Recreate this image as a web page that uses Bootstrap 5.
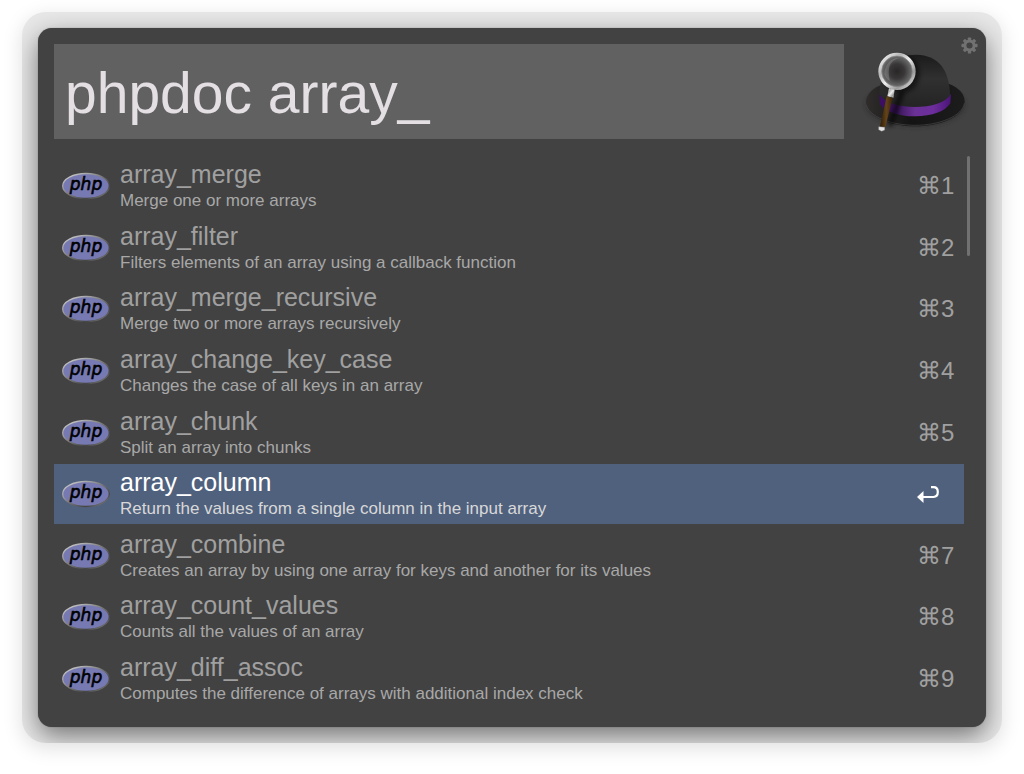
<!DOCTYPE html>
<html lang="en">
<head>
<meta charset="utf-8">
<meta name="viewport" content="width=device-width, initial-scale=1">
<title>phpdoc array_</title>
<link href="https://cdn.jsdelivr.net/npm/bootstrap@5.3.0/dist/css/bootstrap.min.css" rel="stylesheet">
<style>
  body { font-family: "Liberation Sans", Arial, sans-serif; background: #fff; padding: 12px 22px 31px; }
  .frame { padding: 16px; border-radius: 24px; background: #e8e8e8; overflow: hidden; box-shadow: 0 5px 20px rgba(0,0,0,.13); }
  .launcher { background: #424242; border-radius: 14px; padding: 16px; gap: 17px; box-shadow: 0 0 1px rgba(0,0,0,.5), 0 9px 26px rgba(0,0,0,.5); }
  .query, .query:focus { background: #616161; color: #e3dfe3; border: 0; border-radius: 0; box-shadow: none; height: 95px; padding: 3px 11px 0; font-size: 57px; line-height: 64px; }
  .hat { width: 110px; height: 88px; }
  .gear { top: 9px; right: 8px; width: 17px; height: 17px; line-height: 0; }
  .results { gap: 3px; }
  .result { background: transparent; color: #a0a0a0; border: 0; border-radius: 0; padding: 0 9px 0 8px; margin-bottom: 2px; flex: 1 1 0; text-align: left; }
  .result:hover { background: #4b4b4b; color: #a0a0a0; }
  .result.active { background: #50617e; color: #fff; margin: 0 0 2px; }
  .logo { width: 48px; height: 28px; margin-right: 10px; }
  .copy { gap: 1px; padding-top: 1px; }
  .title { font-size: 25px; line-height: 28px; }
  .desc { font-size: 17px; line-height: 24px; color: #a8a8a8; }
  .active .desc { color: #d8d8d8; }
  .keys { width: 38px; font-size: 24px; line-height: 28px; }
  .keys .ret { width: 23px; height: 18px; }
  .thumb { width: 3px; height: 100px; border-radius: 2px; background: #717171; }
</style>
</head>
<body class="min-vh-100 d-flex flex-column">
<svg width="0" height="0" class="position-absolute" aria-hidden="true">
  <defs>
    <linearGradient id="rim" x1="0" y1="0" x2="1" y2="1"><stop offset="0" stop-color="#d8d8dc"/><stop offset=".5" stop-color="#777"/><stop offset=".75" stop-color="#444"/><stop offset="1" stop-color="#999"/></linearGradient>
    <symbol id="php" viewBox="0 0 48 28">
      <ellipse cx="24" cy="14" rx="23.3" ry="12.5" fill="#7679b2" stroke="url(#rim)" stroke-width="1.3"/>
      <text x="24" y="18" font-family="DejaVu Sans, sans-serif" font-size="17" font-style="italic" text-anchor="middle" fill="#000" stroke="#000" stroke-width=".6">php</text>
    </symbol>
  </defs>
</svg>
<main class="frame flex-grow-1 d-flex flex-column">
  <div class="launcher position-relative flex-grow-1 d-flex flex-column">
    <div class="d-flex align-items-center">
      <input class="query form-control flex-grow-1" type="text" value="phpdoc array_" aria-label="Query" spellcheck="false">
      <svg class="hat flex-shrink-0 ms-3" viewBox="30 52 330 264" aria-hidden="true">
        <defs>
          <linearGradient id="crown" x1="0" y1="0" x2="0" y2="1"><stop offset="0" stop-color="#1b1b1b"/><stop offset=".45" stop-color="#303030"/><stop offset="1" stop-color="#242424"/></linearGradient>
          <linearGradient id="brim" x1="0" y1="0" x2="1" y2="0"><stop offset="0" stop-color="#302c2c"/><stop offset=".45" stop-color="#141414"/><stop offset="1" stop-color="#1c1c1c"/></linearGradient>
          <linearGradient id="band" x1="0" y1="0" x2="1" y2="0"><stop offset="0" stop-color="#3d0d66"/><stop offset=".25" stop-color="#3a1659"/><stop offset=".5" stop-color="#6b3197"/><stop offset=".75" stop-color="#6d2e9c"/><stop offset="1" stop-color="#4a1477"/></linearGradient>
          <radialGradient id="glass"><stop offset="0" stop-color="#292626"/><stop offset=".45" stop-color="#393737"/><stop offset="1" stop-color="#777"/></radialGradient>
          <linearGradient id="steel" x1="0" y1="0" x2="1" y2="1"><stop offset="0" stop-color="#fff"/><stop offset=".3" stop-color="#b5b5b5"/><stop offset=".5" stop-color="#eee"/><stop offset=".75" stop-color="#999"/><stop offset="1" stop-color="#eee"/></linearGradient>
          <linearGradient id="wood" x1="0" y1="0" x2="1" y2="0"><stop offset="0" stop-color="#2e1c05"/><stop offset=".5" stop-color="#63431a"/><stop offset="1" stop-color="#3a2408"/></linearGradient>
          <filter id="soft" x="-50%" y="-50%" width="200%" height="200%"><feGaussianBlur stdDeviation="6"/></filter>
        </defs>
        <ellipse cx="196" cy="222" rx="149" ry="66" fill="#222" opacity=".5" filter="url(#soft)"/>
        <path d="M88 165C62 177 48 195 48 214C48 258 120 287 196 287S344 258 344 212C344 190 326 171 298 160Z" fill="url(#brim)"/>
        <path d="M49 222C56 258 124 284 196 284S338 256 343 218" fill="none" stroke="#4a4a4a" stroke-width="2"/>
        <path d="M88 195C90 110 130 72 200 72C262 74 298 112 300 194C286 222 240 230 194 230C145 229 105 218 88 195Z" fill="url(#crown)"/>
        <path d="M88 191C105 219 145 228 194 229C244 229 288 216 303 190L301 218C286 242 246 257 196 257C146 257 102 241 90 219Z" fill="url(#band)"/>
        <ellipse cx="156" cy="130" rx="53" ry="57" fill="#000" opacity=".5" filter="url(#soft)"/>
        <path d="M146 182L166 182L128 287L112 287Z" fill="#000" opacity=".6" filter="url(#soft)"/>
        <circle cx="141" cy="122" r="50" fill="url(#glass)"/>
        <path d="M103 130C105 98 124 82 146 82C118 92 112 110 119 151Q108 145 103 130Z" fill="#aaa" opacity=".3"/>
        <circle cx="141" cy="122" r="51" fill="none" stroke="url(#steel)" stroke-width="10"/>
        <circle cx="141" cy="122" r="46" fill="none" stroke="#888" stroke-width="2"/>
        <path d="M117 173L134 177L130 201L112 197Z" fill="url(#steel)"/>
        <path d="M110 197L128 201L106 290L90 287Z" fill="url(#wood)"/>
        <path d="M86 288L104 290L104 298L95 302L86 297Z" fill="#e1e1e1" stroke="#888"/>
      </svg>
    </div>
    <button class="gear btn p-0 border-0 position-absolute" type="button" aria-label="Preferences">
      <svg width="17" height="17" viewBox="-10 -10 20 20" fill="#717171">
        <g id="teeth"><rect x="-2" y="-9.5" width="4" height="19" rx="1"/><rect x="-9.5" y="-2" width="19" height="4" rx="1"/></g>
        <use href="#teeth" transform="rotate(45)"/>
        <circle r="7"/><circle r="3.6" fill="#424242"/>
      </svg>
    </button>
    <div class="results d-flex flex-grow-1">
      <div class="list-group rounded-0 flex-grow-1" id="list"></div>
      <div class="thumb"></div>
    </div>
  </div>
</main>
<script src="https://cdn.jsdelivr.net/npm/bootstrap@5.3.0/dist/js/bootstrap.bundle.min.js"></script>
<script>
  const results = [
    ["array_merge", "Merge one or more arrays"],
    ["array_filter", "Filters elements of an array using a callback function"],
    ["array_merge_recursive", "Merge two or more arrays recursively"],
    ["array_change_key_case", "Changes the case of all keys in an array"],
    ["array_chunk", "Split an array into chunks"],
    ["array_column", "Return the values from a single column in the input array"],
    ["array_combine", "Creates an array by using one array for keys and another for its values"],
    ["array_count_values", "Counts all the values of an array"],
    ["array_diff_assoc", "Computes the difference of arrays with additional index check"]
  ];
  const selected = 5;
  const enter = '<svg class="ret" viewBox="0 0 23 18" aria-label="Return"><path d="M14 2.2H16.5Q20.8 2.2 20.8 7T16.5 12H6" fill="none" stroke="#fff" stroke-width="2.2"/><path d="M0 12L6.5 6V18Z" fill="#fff"/></svg>';
  document.getElementById("list").innerHTML = results.map(([name, text], i) => `
    <button type="button" class="result list-group-item list-group-item-action d-flex align-items-center${i === selected ? " active" : ""}">
      <svg class="logo flex-shrink-0" aria-hidden="true"><use href="#php"/></svg>
      <span class="copy flex-grow-1 d-flex flex-column"><span class="title">${name}</span><span class="desc">${text}</span></span>
      <span class="keys d-flex align-items-center flex-shrink-0">${i === selected ? enter : "⌘" + (i + 1)}</span>
    </button>`).join("");
</script>
</body>
</html>
